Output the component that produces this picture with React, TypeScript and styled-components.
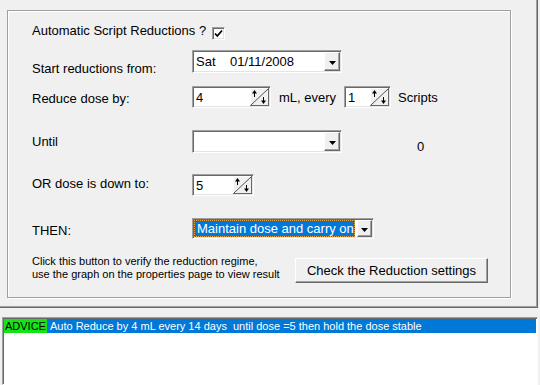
import React from 'react';
import styled, { createGlobalStyle } from 'styled-components';

const GlobalStyle = createGlobalStyle`
  html, body {
    margin: 0;
    padding: 0;
    background: #f0f0f0;
  }
  body {
    font-family: "Liberation Sans", Arial, sans-serif;
    font-size: 13px;
    color: #000;
  }
`;

const Screen = styled.div`
  width: 540px;
  height: 385px;
  overflow: hidden;
  display: flex;
  flex-direction: column;
`;

/* raised frame round the form, only its right and bottom edges are on screen */
const OuterPanel = styled.div`
  box-sizing: border-box;
  width: 538px;
  height: 308px;
  padding: 10px 0 0 7px;
  border-right: 1px solid #696969;
  border-bottom: 1px solid #696969;
  box-shadow: inset -1px -1px 0 #a0a0a0;
`;

const GroupBox = styled.div`
  box-sizing: border-box;
  width: 504px;
  height: 288px;
  padding-left: 24px;
  border: 1px solid #a0a0a0;
  box-shadow: inset 1px 1px 0 #fff, 1px 1px 0 #fff;
  display: flex;
  flex-direction: column;
`;

const Row = styled.div<{ $gap: number; $h: number }>`
  display: flex;
  align-items: flex-start;
  margin-top: ${p => p.$gap}px;
  height: ${p => p.$h}px;
`;

const Label = styled.div<{ $pad?: number; $w?: number }>`
  width: ${p => p.$w ?? 160}px;
  padding-top: ${p => p.$pad ?? 0}px;
  line-height: 15px;
  white-space: nowrap;
`;

const Text = styled.span<{ $pad?: number; $ml?: number }>`
  padding-top: ${p => p.$pad ?? 0}px;
  margin-left: ${p => p.$ml ?? 0}px;
  line-height: 15px;
  white-space: pre;
`;

const CheckBox = styled.span`
  box-sizing: border-box;
  width: 13px;
  height: 13px;
  margin: 5px 0 0 6px;
  background: #fff;
  border: 1px solid;
  border-color: #a0a0a0 #fff #fff #a0a0a0;
  box-shadow: inset 1px 1px 0 #696969, inset -1px -1px 0 #e3e3e3;
  display: flex;
  align-items: center;
  justify-content: center;
`;

const Field = styled.div<{ $w: number; $h: number; $pad?: number }>`
  box-sizing: border-box;
  width: ${p => p.$w}px;
  height: ${p => p.$h}px;
  background: #fff;
  border: 1px solid;
  border-color: #a0a0a0 #fff #fff #a0a0a0;
  box-shadow: inset 1px 1px 0 #696969, inset -1px -1px 0 #e3e3e3;
  padding: 1px 1px 1px ${p => p.$pad ?? 3}px;
  display: flex;
  align-items: center;
  white-space: pre;
`;

const FieldValue = styled.span`
  flex: 1;
  line-height: 15px;
`;

const DropButton = styled.span`
  box-sizing: border-box;
  width: 16px;
  height: 100%;
  background: #f0f0f0;
  border: 1px solid;
  border-color: #fff #696969 #696969 #fff;
  box-shadow: inset -1px -1px 0 #a0a0a0;
  display: flex;
  align-items: center;
  justify-content: center;
  padding-top: 3px;
`;

const SpinWrap = styled.span`
  width: 19px;
  height: 18px;
  display: block;
`;

const Selection = styled.span`
  box-sizing: border-box;
  flex: 1;
  height: 100%;
  margin-right: 2px;
  padding-left: 2px;
  background: #0078d7;
  color: #fff;
  border: 1px dotted #e8a040;
  line-height: 15px;
`;

const Note = styled.div`
  width: 263px;
  font-size: 11px;
  line-height: 13px;
  white-space: nowrap;
`;

const PushButton = styled.button`
  box-sizing: border-box;
  width: 193px;
  height: 25px;
  margin-top: 3px;
  padding: 0;
  background: #f0f0f0;
  border: 1px solid;
  border-color: #fff #696969 #696969 #fff;
  box-shadow: inset -1px -1px 0 #a0a0a0;
  font-family: "Liberation Sans", Arial, sans-serif;
  font-size: 13px;
  color: #000;
`;

const ListBox = styled.div`
  box-sizing: border-box;
  width: 536px;
  height: 68px;
  margin: 9px 0 0 2px;
  padding: 1px;
  background: #fff;
  border: 1px solid;
  border-color: #a0a0a0 #fff #fff #a0a0a0;
  box-shadow: inset 1px 1px 0 #696969;
`;

const ListRow = styled.div<{ $selected?: boolean }>`
  height: 14px;
  display: flex;
  font-size: 11px;
  line-height: 14px;
  white-space: pre;
  background: ${p => (p.$selected ? '#0078d7' : 'transparent')};
  color: ${p => (p.$selected ? '#fff' : '#000')};
`;

const Badge = styled.span`
  background: #16e316;
  color: #000;
  padding: 0 1px;
  margin-right: 3px;
`;

const Arrow = () => (
  <svg width="7" height="4" viewBox="0 0 7 4">
    <polygon points="0,0 7,0 3.5,4" fill="#000" />
  </svg>
);

const Spin = () => (
  <SpinWrap>
    <svg width="19" height="18" viewBox="0 0 19 18">
      <rect x="0" y="0" width="19" height="18" fill="#f0f0f0" />
      <line x1="0" y1="0.5" x2="19" y2="0.5" stroke="#fff" />
      <line x1="0.5" y1="0" x2="0.5" y2="18" stroke="#fff" />
      <line x1="18.5" y1="0" x2="18.5" y2="18" stroke="#696969" />
      <line x1="0" y1="17.5" x2="19" y2="17.5" stroke="#696969" />
      <line x1="1" y1="17" x2="18" y2="1" stroke="#505050" />
      <line x1="4.5" y1="3" x2="4.5" y2="9" stroke="#000" />
      <polygon points="2,5.5 4.5,2 7,5.5" fill="#000" />
      <line x1="13.5" y1="9" x2="13.5" y2="15" stroke="#000" />
      <polygon points="11,12.5 13.5,16 16,12.5" fill="#000" />
    </svg>
  </SpinWrap>
);

const Combo = ({ w, h, children }: { w: number; h: number; children?: React.ReactNode }) => (
  <Field $w={w} $h={h}>
    <FieldValue>{children}</FieldValue>
    <DropButton>
      <Arrow />
    </DropButton>
  </Field>
);

const SpinBox = ({ w, value }: { w: number; value: string }) => (
  <Field $w={w} $h={22}>
    <FieldValue>{value}</FieldValue>
    <Spin />
  </Field>
);

export default function App() {
  return (
    <Screen>
      <GlobalStyle />
      <OuterPanel>
        <GroupBox>
          <Row $gap={11} $h={16}>
            <Text $pad={1}>Automatic Script Reductions ?</Text>
            <CheckBox>
              <svg width="9" height="9" viewBox="0 0 9 9">
                <path d="M1 4.5 L3.3 7 L8 1.5" fill="none" stroke="#000" strokeWidth="1.8" />
              </svg>
            </CheckBox>
          </Row>

          <Row $gap={12} $h={23}>
            <Label $pad={11}>Start reductions from:</Label>
            <Combo w={150} h={23}>Sat    01/11/2008</Combo>
          </Row>

          <Row $gap={13} $h={22}>
            <Label $pad={5}>Reduce dose by:</Label>
            <SpinBox w={79} value="4" />
            <Text $pad={4} $ml={8}>mL, every</Text>
            <Field $w={47} $h={22} style={{ marginLeft: 8 }}>
              <FieldValue>1</FieldValue>
              <Spin />
            </Field>
            <Text $pad={4} $ml={7}>Scripts</Text>
          </Row>

          <Row $gap={22} $h={23}>
            <Label $pad={4}>Until</Label>
            <Combo w={150} h={23} />
            <Text $pad={9} $ml={75}>0</Text>
          </Row>

          <Row $gap={21} $h={23}>
            <Label $pad={2}>OR dose is down to:</Label>
            <SpinBox w={62} value="5" />
          </Row>

          <Row $gap={21} $h={21}>
            <Label $pad={5}>THEN:</Label>
            <Field $w={182} $h={21} $pad={1}>
              <Selection>Maintain dose and carry on</Selection>
              <DropButton>
                <Arrow />
              </DropButton>
            </Field>
          </Row>

          <Row $gap={16} $h={28}>
            <Note>
              Click this button to verify the reduction regime,
              <br />
              use the graph on the properties page to view result
            </Note>
            <PushButton>Check the Reduction settings</PushButton>
          </Row>
        </GroupBox>
      </OuterPanel>

      <ListBox>
        <ListRow $selected>
          <Badge>ADVICE</Badge>
          Auto Reduce by 4 mL every 14 days  until dose =5 then hold the dose stable
        </ListRow>
      </ListBox>
    </Screen>
  );
}
